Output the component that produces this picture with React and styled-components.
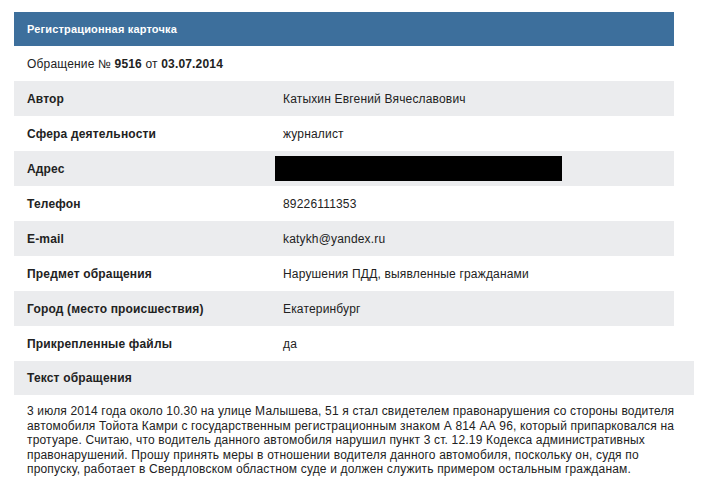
import styled, { createGlobalStyle } from "styled-components";

const GlobalStyle = createGlobalStyle`
  body {
    margin: 0;
    background: #fff;
    font-family: "Liberation Sans", Arial, sans-serif;
    color: #222;
    letter-spacing: 0.17px;
  }
`;

const rows = [
  { label: "Автор", value: "Катыхин Евгений Вячеславович" },
  { label: "Сфера деятельности", value: "журналист" },
  { label: "Адрес", hidden: true },
  { label: "Телефон", value: "89226111353" },
  { label: "E-mail", value: "katykh@yandex.ru" },
  { label: "Предмет обращения", value: "Нарушения ПДД, выявленные гражданами" },
  { label: "Город (место происшествия)", value: "Екатеринбург" },
  { label: "Прикрепленные файлы", value: "да" },
];

const App = () => {
  return (
    <Page>
      <GlobalStyle />
      <Card>
        <Header>Регистрационная карточка</Header>
        <Row>
          <span>
            Обращение № <b>9516</b> от <b>03.07.2014</b>
          </span>
        </Row>
        {rows.map((r, i) => (
          <Row key={r.label} $shaded={i % 2 === 0}>
            <Label>{r.label}</Label>
            {r.hidden ? <Redacted /> : <Value>{r.value}</Value>}
          </Row>
        ))}
      </Card>
      <TextBlock>
        <TextTitle>Текст обращения</TextTitle>
        <Body>
          3 июля 2014 года около 10.30 на улице Малышева, 51 я стал свидетелем
          правонарушения со стороны водителя автомобиля Тойота Камри с
          государственным регистрационным знаком А 814 АА 96, который
          припарковался на тротуаре. Считаю, что водитель данного автомобиля
          нарушил пункт 3 ст. 12.19 Кодекса административных правонарушений.
          Прошу принять меры в отношении водителя данного автомобиля, поскольку
          он, судя по пропуску, работает в Свердловском областном суде и должен
          служить примером остальным гражданам.
        </Body>
      </TextBlock>
    </Page>
  );
};

export default App;

const Page = styled.div`
  padding: 12px 0 0 14px;
  width: 680px;
`;

const Card = styled.div`
  width: 660px;
`;

const Header = styled.div`
  height: 34px;
  background: #3d6f9c;
  color: #fff;
  font-size: 11px;
  font-weight: bold;
  display: flex;
  align-items: center;
  padding-left: 13px;
`;

const Row = styled.div`
  height: 35px;
  display: grid;
  grid-template-columns: 256px 1fr;
  align-items: center;
  padding-left: 13px;
  font-size: 12px;
  background: ${(p) => (p.$shaded ? "#ebecee" : "#fff")};

  b {
    font-weight: bold;
  }
`;

const Label = styled.span`
  font-weight: bold;
`;

const Value = styled.span``;

const Redacted = styled.div`
  width: 287px;
  height: 25px;
  margin-left: -8px;
  background: #000;
`;

const TextBlock = styled.div`
  width: 680px;
`;

const TextTitle = styled.div`
  height: 34px;
  display: flex;
  align-items: center;
  padding-left: 13px;
  background: #ebecee;
  font-size: 12px;
  font-weight: bold;
`;

const Body = styled.p`
  margin: 9px 0 0;
  padding: 0 14px 0 13px;
  font-size: 12px;
  line-height: 14.5px;
`;
